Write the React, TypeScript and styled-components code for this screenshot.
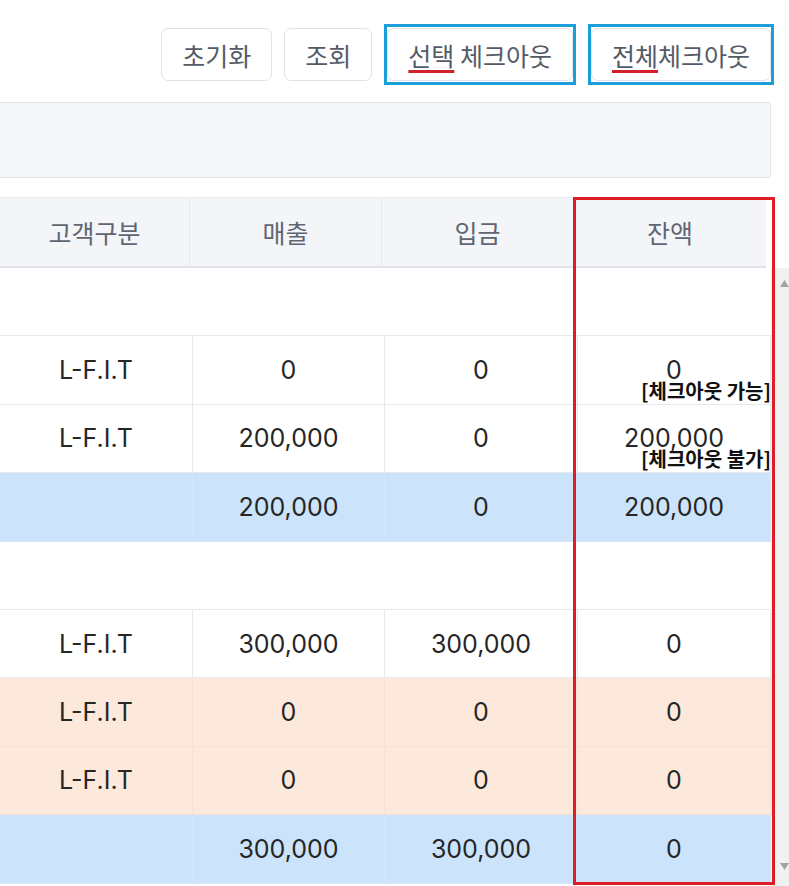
import React from 'react';
import styled, { createGlobalStyle } from 'styled-components';

const GlobalStyle = createGlobalStyle`
  html, body { margin: 0; padding: 0; background: #ffffff; overflow: hidden; }
  body { font-family: Inter, "Noto Sans CJK KR", sans-serif; }
  * { box-sizing: border-box; }
`;

const Page = styled.div`
  position: relative;
  width: 789px;
  height: 886px;
  overflow: hidden;
  padding-top: 24px;
`;

const Toolbar = styled.div`
  display: flex;
  justify-content: flex-end;
  align-items: center;
  gap: 12px;
  padding-right: 15px;
  height: 61px;
`;

const Button = styled.button`
  height: 53px;
  padding: 0 20px;
  background: #ffffff;
  border: 1px solid #dfe2e6;
  border-radius: 7px;
  font-family: "Noto Sans CJK KR", sans-serif;
  font-size: 25px;
  color: #555b66;
  white-space: nowrap;
  cursor: pointer;
`;

const Highlight = styled.div`
  display: flex;
  border: 3px solid #1a9fdb;
  padding: 1px 0;
`;

const Marked = styled.span`
  text-decoration: underline;
  text-decoration-color: #d4202a;
  text-decoration-thickness: 3px;
  text-underline-offset: 4px;
`;

const FilterPanel = styled.div`
  margin-top: 17px;
  margin-left: -1px;
  width: 772px;
  height: 76px;
  background: #f4f6f9;
  border: 1px solid #e3e6ea;
  border-radius: 2px;
`;

const HeaderRow = styled.div`
  margin-top: 19px;
  display: grid;
  grid-template-columns: 190px 192px 192px 192px;
  width: 766px;
  height: 71px;
  background: #f3f5f9;
  border-top: 1px solid #e8eaee;
  border-bottom: 2px solid #e0e3e7;
`;

const HeaderCell = styled.div`
  display: flex;
  align-items: center;
  justify-content: center;
  font-family: "Noto Sans CJK KR", sans-serif;
  font-size: 25px;
  color: #5f6571;
  border-right: 1px solid #e6e8ec;
  &:last-child { border-right: none; }
`;

const BodyArea = styled.div`
  display: flex;
  height: 618px;
`;

const Rows = styled.div`
  width: 771px;
  display: flex;
  flex-direction: column;
`;

type Tone = 'plain' | 'total' | 'warn';

const toneBg: Record<Tone, string> = {
  plain: '#ffffff',
  total: '#cce4fb',
  warn: '#fde9db',
};

const toneLine: Record<Tone, string> = {
  plain: '#e6e8eb',
  total: '#d4e6f8',
  warn: '#f5e2d4',
};

const GroupRow = styled.div`
  flex: none;
  height: 68.4px;
  background: #ffffff;
  border-bottom: 1px solid #e6e8eb;
`;

const Row = styled.div<{ $tone: Tone }>`
  flex: none;
  display: grid;
  grid-template-columns: 193px 192px 193px 193px;
  height: 68.4px;
  background: ${(p) => toneBg[p.$tone]};
  border-bottom: 1px solid ${(p) => toneLine[p.$tone]};
`;

const Cell = styled.div<{ $tone: Tone }>`
  position: relative;
  display: flex;
  align-items: center;
  justify-content: center;
  font-family: Inter, "Noto Sans CJK KR", sans-serif;
  font-size: 25px;
  color: #262626;
  border-right: 1px solid ${(p) => toneLine[p.$tone]};
`;

const StatusNote = styled.span`
  position: absolute;
  right: -1px;
  bottom: 3px;
  font-family: "Noto Sans CJK KR", sans-serif;
  font-weight: 700;
  font-size: 20px;
  line-height: 1;
  color: #111111;
  white-space: nowrap;
`;

const Scrollbar = styled.div`
  width: 18px;
  background: #f1f1f1;
  display: flex;
  flex-direction: column;
  justify-content: space-between;
  align-items: flex-end;
  padding: 12px 0 16px;
`;

const ArrowIcon = styled.svg`
  display: block;
`;

const RedFrame = styled.div`
  position: absolute;
  left: 573px;
  top: 197px;
  width: 202px;
  height: 688px;
  border: 3px solid #dc1e27;
  pointer-events: none;
`;

type DataRow = {
  kind: 'data';
  tone: Tone;
  cells: string[];
  note?: string;
};
type Blank = { kind: 'blank' };

const rows: (DataRow | Blank)[] = [
  { kind: 'blank' },
  { kind: 'data', tone: 'plain', cells: ['L-F.I.T', '0', '0', '0'], note: '[체크아웃 가능]' },
  { kind: 'data', tone: 'plain', cells: ['L-F.I.T', '200,000', '0', '200,000'], note: '[체크아웃 불가]' },
  { kind: 'data', tone: 'total', cells: ['', '200,000', '0', '200,000'] },
  { kind: 'blank' },
  { kind: 'data', tone: 'plain', cells: ['L-F.I.T', '300,000', '300,000', '0'] },
  { kind: 'data', tone: 'warn', cells: ['L-F.I.T', '0', '0', '0'] },
  { kind: 'data', tone: 'warn', cells: ['L-F.I.T', '0', '0', '0'] },
  { kind: 'data', tone: 'total', cells: ['', '300,000', '300,000', '0'] },
];

export default function App() {
  return (
    <Page>
      <GlobalStyle />
      <Toolbar>
        <Button>초기화</Button>
        <Button>조회</Button>
        <Highlight>
          <Button>
            <Marked>선택</Marked> 체크아웃
          </Button>
        </Highlight>
        <Highlight>
          <Button>
            <Marked>전체</Marked>체크아웃
          </Button>
        </Highlight>
      </Toolbar>
      <FilterPanel />
      <HeaderRow>
        <HeaderCell>고객구분</HeaderCell>
        <HeaderCell>매출</HeaderCell>
        <HeaderCell>입금</HeaderCell>
        <HeaderCell>잔액</HeaderCell>
      </HeaderRow>
      <BodyArea>
        <Rows>
          {rows.map((r, i) =>
            r.kind === 'blank' ? (
              <GroupRow key={i} />
            ) : (
              <Row key={i} $tone={r.tone}>
                {r.cells.map((c, j) => (
                  <Cell key={j} $tone={r.tone}>
                    {c}
                    {j === 3 && r.note ? <StatusNote>{r.note}</StatusNote> : null}
                  </Cell>
                ))}
              </Row>
            )
          )}
        </Rows>
        <Scrollbar>
          <ArrowIcon width="9" height="7" viewBox="0 0 9 7">
            <polygon points="0,7 4.5,0 9,7" fill="#a3a3a3" />
          </ArrowIcon>
          <ArrowIcon width="9" height="7" viewBox="0 0 9 7">
            <polygon points="0,0 9,0 4.5,7" fill="#a3a3a3" />
          </ArrowIcon>
        </Scrollbar>
      </BodyArea>
      <RedFrame />
    </Page>
  );
}
